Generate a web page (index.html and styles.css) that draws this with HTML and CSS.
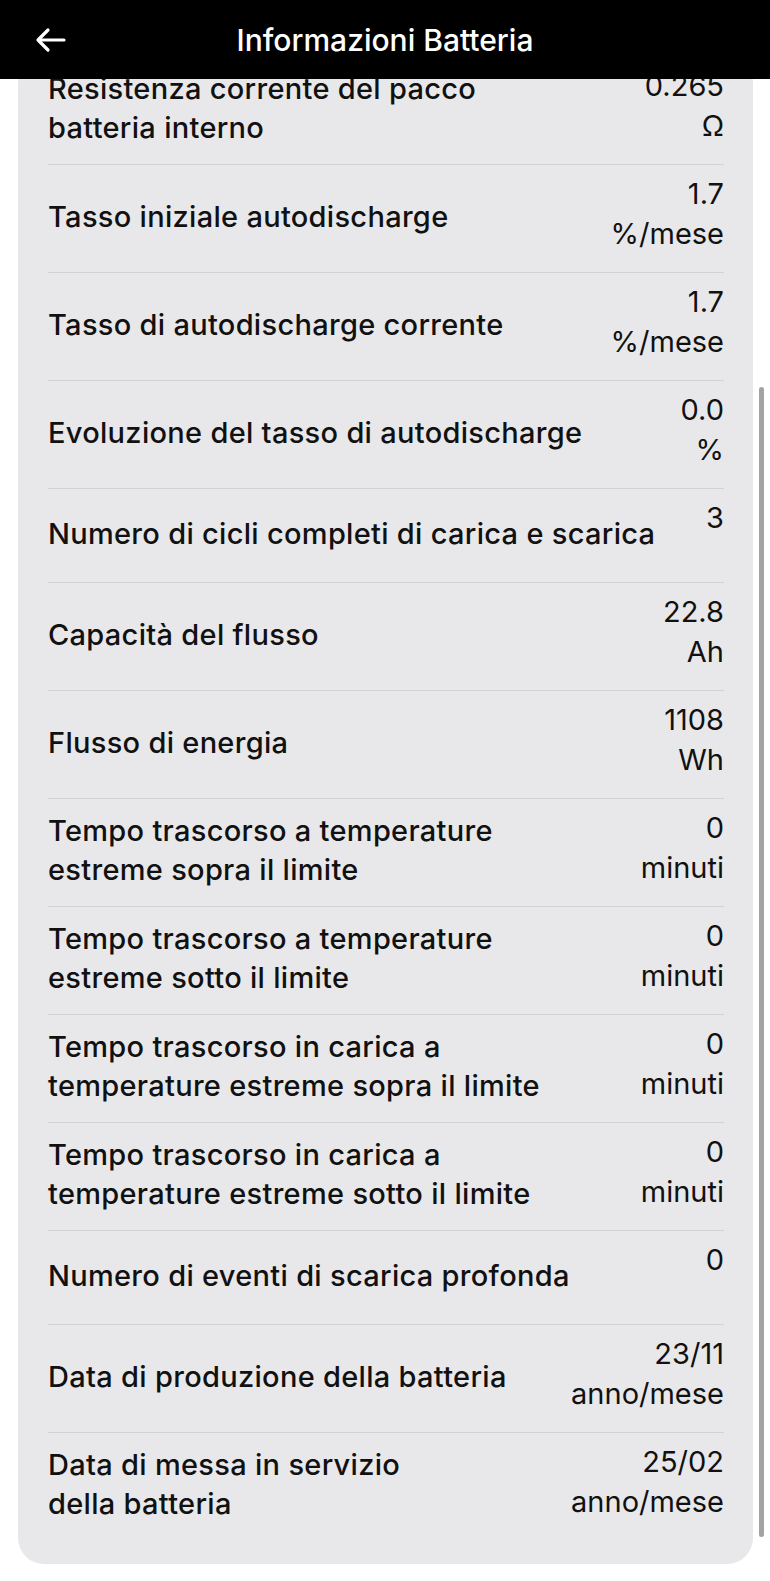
FILE: index.html
```html
<!DOCTYPE html>
<html lang="it">
<head>
    <meta charset="UTF-8">
    <title>Informazioni Batteria</title>
    <link rel="stylesheet" href="styles.css">
</head>
<body>
    <div class="topbar">
        <svg class="back" width="32" height="26" viewBox="0 0 32 26">
            <path d="M30 13H4M14 3L4 13l10 10" fill="none" stroke="#fff" stroke-width="3.2" stroke-linecap="round" stroke-linejoin="round"/>
        </svg>
        <h1>Informazioni Batteria</h1>
    </div>

    <div class="scrollbar"></div>

    <div class="page">
        <div class="card">
            <div class="row">
                <div class="label">Resistenza corrente del pacco<br>batteria interno</div>
                <div class="value"><span>0.265</span><span>Ω</span></div>
            </div>
            <div class="row">
                <div class="label">Tasso iniziale autodischarge</div>
                <div class="value"><span>1.7</span><span>%/mese</span></div>
            </div>
            <div class="row">
                <div class="label">Tasso di autodischarge corrente</div>
                <div class="value"><span>1.7</span><span>%/mese</span></div>
            </div>
            <div class="row">
                <div class="label">Evoluzione del tasso di autodischarge</div>
                <div class="value"><span>0.0</span><span>%</span></div>
            </div>
            <div class="row">
                <div class="label">Numero di cicli completi di carica e scarica</div>
                <div class="value"><span>3</span></div>
            </div>
            <div class="row">
                <div class="label">Capacità del flusso</div>
                <div class="value"><span>22.8</span><span>Ah</span></div>
            </div>
            <div class="row">
                <div class="label">Flusso di energia</div>
                <div class="value"><span>1108</span><span>Wh</span></div>
            </div>
            <div class="row">
                <div class="label">Tempo trascorso a temperature<br>estreme sopra il limite</div>
                <div class="value"><span>0</span><span>minuti</span></div>
            </div>
            <div class="row">
                <div class="label">Tempo trascorso a temperature<br>estreme sotto il limite</div>
                <div class="value"><span>0</span><span>minuti</span></div>
            </div>
            <div class="row">
                <div class="label">Tempo trascorso in carica a<br>temperature estreme sopra il limite</div>
                <div class="value"><span>0</span><span>minuti</span></div>
            </div>
            <div class="row">
                <div class="label">Tempo trascorso in carica a<br>temperature estreme sotto il limite</div>
                <div class="value"><span>0</span><span>minuti</span></div>
            </div>
            <div class="row">
                <div class="label">Numero di eventi di scarica profonda</div>
                <div class="value"><span>0</span></div>
            </div>
            <div class="row">
                <div class="label">Data di produzione della batteria</div>
                <div class="value"><span>23/11</span><span>anno/mese</span></div>
            </div>
            <div class="row">
                <div class="label">Data di messa in servizio<br>della batteria</div>
                <div class="value"><span>25/02</span><span>anno/mese</span></div>
            </div>
        </div>
    </div>
</body>
</html>
```

FILE: styles.css
```css
body {
    margin: 0;
    background: #fff;
    font-family: Inter, "Noto Sans", sans-serif;
    color: #111;
}

.topbar {
    position: fixed;
    top: 0;
    left: 0;
    right: 0;
    height: 79px;
    background: #000;
    display: flex;
    align-items: center;
    justify-content: center;
    z-index: 2;
}

.topbar h1 {
    margin: 0;
    color: #fff;
    font-size: 30px;
    font-weight: 500;
}

.back {
    position: absolute;
    left: 34px;
    top: 27px;
}

.scrollbar {
    position: fixed;
    left: 759px;
    top: 387px;
    width: 5px;
    height: 1150px;
    border-radius: 3px;
    background: #a3a3a3;
}

.page {
    padding: 57px 17px 19px 18px;
}

.card {
    background: #e8e8ea;
    border-radius: 26px;
    padding: 0 29px 24px 30px;
}

.row {
    display: flex;
    justify-content: space-between;
    align-items: flex-start;
    gap: 20px;
    padding: 9px 0 14px;
    border-bottom: 1px solid #d2d2d6;
}

.row:last-child {
    border-bottom: none;
}

.label {
    font-size: 29px;
    font-weight: 500;
    letter-spacing: 0.3px;
    line-height: 39px;
    min-height: 70px;
    display: flex;
    align-items: center;
    align-self: center;
}

.value {
    display: flex;
    flex-direction: column;
    align-items: flex-end;
    text-align: right;
    font-size: 29px;
    font-weight: 400;
    line-height: 40px;
    padding-bottom: 4px;
    white-space: nowrap;
}
```
